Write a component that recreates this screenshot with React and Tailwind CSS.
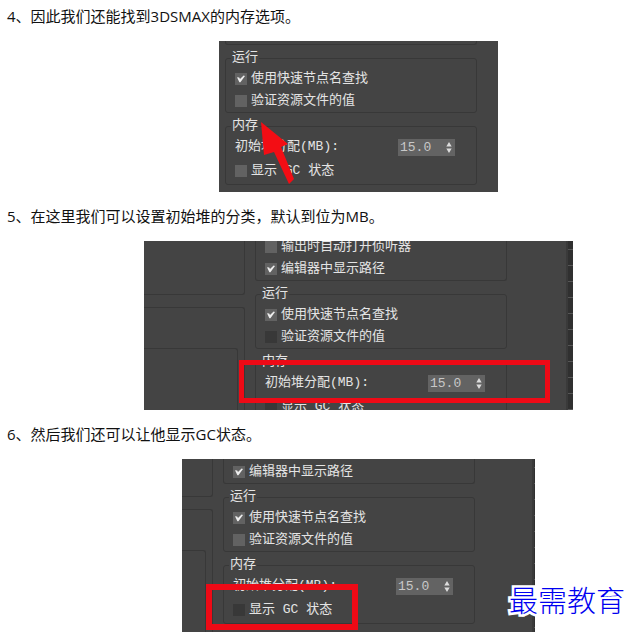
import React from "react";

const rowText = "text-[13px] leading-[22px] text-[#e4e4e4] whitespace-pre";

function Tick({ label, checked = false, dark = false, className = "h-[22px]" }) {
  return (
    <label className={`flex items-center gap-1 pl-[9px] ${className}`}>
      <span className="relative flex h-3 w-3 shrink-0">
        <input
          type="checkbox"
          defaultChecked={checked}
          className={`peer h-3 w-3 appearance-none ${dark ? "bg-[#383838]" : "bg-[#626262]"}`}
        />
        <svg
          viewBox="0 0 12 12"
          className="pointer-events-none absolute inset-0 hidden h-3 w-3 peer-checked:block"
          fill="#ededed"
        >
          <path d="M2 4.2 4.2 4.6 5 6 8.6 2.4 10 3 5.4 9.2 4.4 9.2z" />
        </svg>
      </span>
      <span className={rowText}>{label}</span>
    </label>
  );
}

function Group({ title, children, className = "" }) {
  return (
    <fieldset className={`min-w-0 rounded-[3px] border border-[#383838] ${className}`}>
      {title && (
        <legend className="ml-[5px] h-5 px-px text-[13px] leading-5 text-[#e4e4e4]">{title}</legend>
      )}
      {children}
    </fieldset>
  );
}

function HeapSize({ id }) {
  return (
    <div className="flex h-[22px] items-center justify-between pl-[9px] pr-[21px]">
      <label htmlFor={id} className={rowText}>
        初始堆分配(MB):
      </label>
      <span className="flex h-[17px] w-[57px] items-center bg-[#636363] pr-[3px]">
        <input
          id={id}
          type="text"
          defaultValue="15.0"
          className="h-[17px] w-full min-w-0 bg-transparent pl-[2px] text-[13px] leading-[17px] text-[#c8c8c8] outline-none"
        />
        <svg viewBox="0 0 6 11" className="h-[11px] w-[6px] shrink-0" fill="#dcdcdc">
          <path d="M3 0 5.7 4.4H.3zM3 11 .3 6.6h5.4z" />
        </svg>
      </span>
    </div>
  );
}

function Settings({ id, darkVerify = false, darkGc = false, className = "" }) {
  return (
    <div className={`flex w-[252px] shrink-0 flex-col gap-[3px] ${className}`}>
      <Group className="border-t-0">
        <Tick label="输出时自动打开侦听器" />
        <Tick label="编辑器中显示路径" checked />
      </Group>
      <Group title="运行">
        <Tick label="使用快速节点名查找" checked />
        <Tick label="验证资源文件的值" dark={darkVerify} />
      </Group>
      <Group title="内存">
        <HeapSize id={id} />
        <Tick label="显示 GC 状态" dark={darkGc} className="h-[26px]" />
      </Group>
    </div>
  );
}

function SideBoxes({ className = "" }) {
  return (
    <div className={`flex shrink-0 flex-col gap-3 ${className}`}>
      <div className="h-[60px] rounded-br-[3px] border-r border-b border-[#383838]" />
      <div className="h-[200px] rounded-tr-[3px] border-t border-r border-[#383838] pt-[40px] pr-[6px]">
        <div className="h-full rounded-tr-[3px] border-t border-r border-[#383838]" />
      </div>
    </div>
  );
}

function GridEdge({ className = "" }) {
  return (
    <div
      className={`ml-auto shrink-0 border-l-2 border-[#3a3a3a] bg-[repeating-linear-gradient(#303030_0_8px,#565656_8px_9px,#303030_9px_16px)] ${className}`}
    />
  );
}

function Shot({ children, className }) {
  return (
    <div
      className={`relative mx-auto flex items-start overflow-hidden bg-[#444444] font-['Liberation_Mono','Noto_Sans_CJK_SC',monospace] ${className}`}
    >
      {children}
    </div>
  );
}

function Step({ children }) {
  return <p className="pl-[7px] text-[15px] leading-8 text-[#111111]">{children}</p>;
}

export default function App() {
  return (
    <main className="relative overflow-hidden bg-white font-['Open_Sans','Noto_Sans_CJK_SC',sans-serif]">
      <Step>4、因此我们还能找到3DSMAX的内存选项。</Step>
      <div className="mt-[9px] mb-2 pl-[85px]">
        <Shot className="h-[151px] w-[279px]">
          <Settings id="heap-a" className="-mt-[41px] ml-[6px]" />
          <svg viewBox="0 0 40 70" className="absolute top-[79px] left-[38px] h-[70px] w-10" fill="#f30d14">
            <path d="M4 2 31 24 24 27 37 59 32 64 17 32 7 35z" />
          </svg>
        </Shot>
      </div>
      <Step>5、在这里我们可以设置初始堆的分类，默认到位为MB。</Step>
      <div className="mt-[9px] mb-2 pl-[85px]">
        <Shot className="h-[169px] w-[429px]">
          <SideBoxes className="-mt-[6px] w-[101px]" />
          <Settings id="heap-b" darkVerify darkGc className="-mt-[5px] ml-[10px]" />
          <GridEdge className="h-[169px] w-[7px]" />
          <div className="absolute top-[119px] left-[95px] h-[43px] w-[311px] border-[5px] border-[#ee0a16]" />
        </Shot>
      </div>
      <Step>6、然后我们还可以让他显示GC状态。</Step>
      <div className="mt-[9px] pl-[85px]">
        <Shot className="h-[173px] w-[353px]">
          <SideBoxes className="-mt-[22px] w-[31px]" />
          <Settings id="heap-c" darkGc className="-mt-5 ml-[10px]" />
          <GridEdge className="h-[173px] w-[3px]" />
          <div className="absolute top-[125px] left-[24px] h-[46px] w-[152px] border-[6px] border-[#ee0a16]" />
        </Shot>
      </div>
      <div className="absolute right-[7px] bottom-[11px] text-[29px] leading-10 font-light text-[#0000f0] [paint-order:stroke_fill] [-webkit-text-stroke:5px_white]">
        最需教育
      </div>
    </main>
  );
}
